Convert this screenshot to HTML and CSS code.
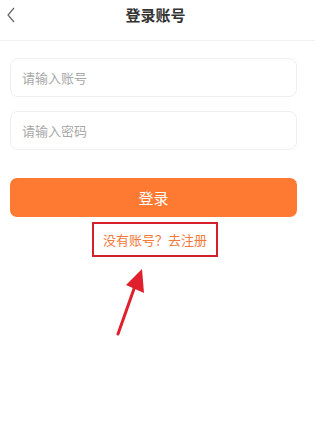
FILE: index.html
```html
<!DOCTYPE html>
<html lang="zh-CN">
<head>
  <meta charset="UTF-8">
  <meta name="viewport" content="width=device-width, initial-scale=1.0">
  <title>登录账号</title>
  <link rel="stylesheet" href="styles.css">
</head>
<body>
  <div class="page">
    <div class="header">
      <span class="back">
        <svg width="10" height="16" viewBox="0 0 10 16">
          <path d="M8 1 L2 8 L8 15" fill="none" stroke="#666" stroke-width="1.2"/>
        </svg>
      </span>
      <h1>登录账号</h1>
    </div>
    <form class="login-form">
      <input type="text" class="field" placeholder="请输入账号">
      <input type="password" class="field" placeholder="请输入密码">
      <button type="button" class="btn">登录</button>
      <div class="register">
        <a href="#">没有账号？去注册</a>
      </div>
    </form>
    <svg class="arrow" width="40" height="70" viewBox="0 0 40 70">
      <line x1="8" y1="66" x2="25" y2="18" stroke="#e0202c" stroke-width="3" stroke-linecap="round"/>
      <polygon points="32,1 34,25 16,17" fill="#e0202c"/>
    </svg>
  </div>
</body>
</html>
```
FILE: styles.css
```css
* {
  margin: 0;
  padding: 0;
  box-sizing: border-box;
  font-family: "Noto Sans CJK SC", "Noto Sans", sans-serif;
}

body {
  background: #fff;
  width: 330px;
  height: 446px;
}

.page {
  position: relative;
  width: 315px;
}

.header {
  height: 41px;
  display: flex;
  align-items: center;
  justify-content: center;
  border-bottom: 1px solid #f2f2f2;
  position: relative;
}

.header h1 {
  font-size: 15px;
  font-weight: bold;
  color: #333;
  margin-top: -11px;
  margin-left: -4px;
}

.back {
  position: absolute;
  left: 6px;
  top: 7px;
  display: flex;
}

.login-form {
  width: 287px;
  margin-left: 10px;
  padding-top: 17px;
  display: flex;
  flex-direction: column;
}

.field {
  height: 39px;
  border: 1px solid #efefef;
  border-radius: 8px;
  padding: 0 11px;
  font-size: 13px;
  color: #333;
  outline: none;
  margin-bottom: 14px;
}

.field::placeholder {
  color: #a8a8a8;
}

.btn {
  margin-top: 14px;
  height: 39px;
  border: none;
  border-radius: 7px;
  background: #fe7a33;
  color: #fff;
  font-size: 15px;
  cursor: pointer;
}

.register {
  align-self: center;
  margin-top: 5px;
  margin-left: 3px;
  width: 126px;
  height: 35px;
  border: 2px solid #d4202c;
  display: flex;
  align-items: center;
  justify-content: center;
}

.register a {
  font-size: 13px;
  color: #f07a3a;
  text-decoration: none;
}

.arrow {
  position: absolute;
  left: 110px;
  top: 268px;
}
```
